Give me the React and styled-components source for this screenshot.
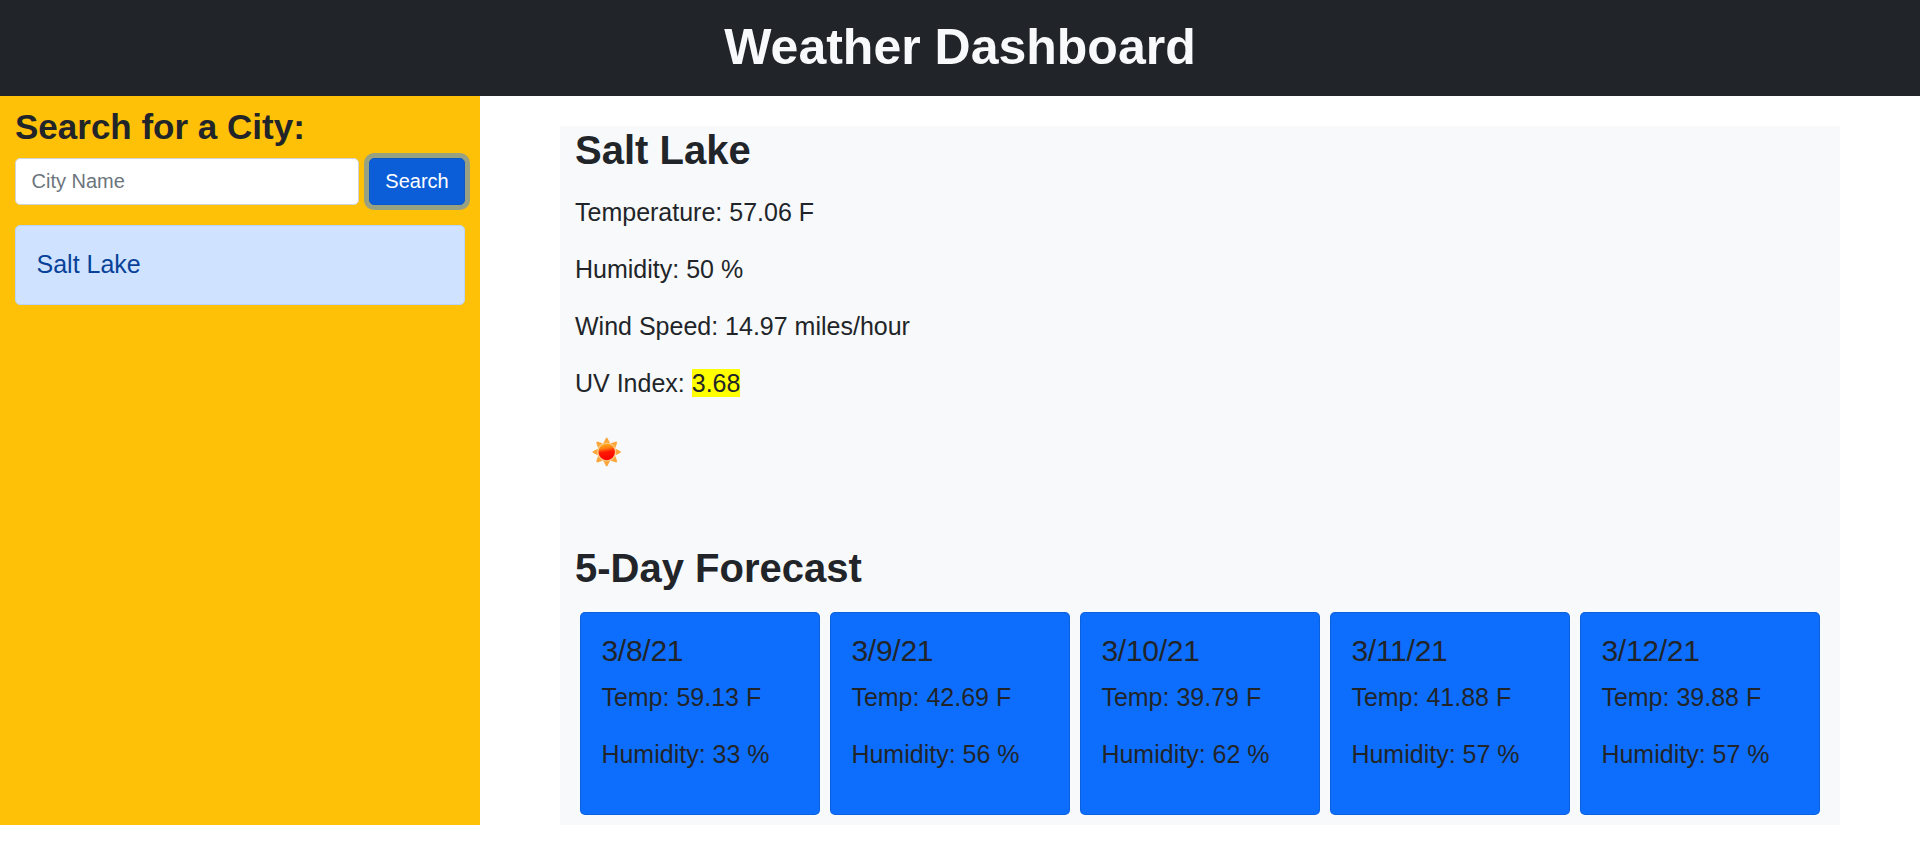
import React from "react";
import styled, { createGlobalStyle } from "styled-components";

const GlobalStyle = createGlobalStyle`
  *, *::before, *::after { box-sizing: border-box; }
  body {
    margin: 0;
    background: #fff;
    color: #212529;
    font-family: "Liberation Sans", Arial, sans-serif;
    font-size: 25px;
    line-height: 37px;
  }
  h1, h2, h3, p { margin: 0; }
`;

const Header = styled.header`
  height: 96px;
  padding-top: 17px;
  background: #212529;
  color: #f8f9fa;
  text-align: center;
`;

const Title = styled.h1`
  font-size: 50px;
  line-height: 60px;
  font-weight: 700;
`;

const Layout = styled.main`
  display: flex;
  height: 729px;
`;

const Sidebar = styled.aside`
  width: 480px;
  padding: 10px 15px 0;
  background: #ffc107;
`;

const SearchHeading = styled.h2`
  font-size: 35px;
  line-height: 42px;
  margin-bottom: 10px;
`;

const SearchForm = styled.form`
  display: flex;
  gap: 10px;
  margin-bottom: 20px;
`;

const CityInput = styled.input`
  flex: 1;
  min-width: 0;
  height: 47px;
  padding: 7px 15px 8px 15.5px;
  border: 1px solid #ced4da;
  border-radius: 5px;
  background: #fff;
  font: 20px/30px "Liberation Sans", Arial, sans-serif;
  &::placeholder { color: #6c757d; opacity: 1; }
`;

const SearchButton = styled.button`
  width: 96px;
  height: 47px;
  padding: 0 0 2px;
  border: 1px solid #0a58ca;
  border-radius: 5px;
  background: #0b5ed7;
  color: #fff;
  font: 20px/30px "Liberation Sans", Arial, sans-serif;
  box-shadow: 0 0 0 5px rgba(49, 132, 253, 0.5);
`;

const HistoryItem = styled.div`
  height: 80px;
  padding: 20px 20px 20px 20.5px;
  border: 1px solid #b6d4fe;
  border-radius: 5px;
  background: #cfe2ff;
  color: #084298;
`;

const Content = styled.section`
  flex: 1;
  padding: 30px 80px 0;
`;

const Panel = styled.div`
  height: 699px;
  padding: 0 15px;
  background: #f8f9fa;
`;

const SectionHeading = styled.h2`
  font-size: 40px;
  line-height: 48px;
  margin-bottom: 20px;
`;

const Reading = styled.p`
  margin-bottom: 20px;
`;

const UvValue = styled.span`
  background: #ff0;
`;

const WeatherIcon = styled.svg`
  display: block;
  width: 62px;
  height: 62px;
  margin: -1px 0 61px;
`;

const Forecast = styled.div`
  display: grid;
  grid-template-columns: repeat(5, 240px);
  gap: 10px;
  padding-left: 5px;
`;

const DayCard = styled.article`
  height: 203px;
  padding: 20px 20px 20px 20.4px;
  border: 1px solid rgba(0, 0, 0, 0.125);
  border-radius: 5px;
  background: #0d6efd;
`;

const DayTitle = styled.h3`
  font-size: 30px;
  line-height: 36px;
  font-weight: 400;
  letter-spacing: -0.25px;
  margin-bottom: 10px;
`;

const DAYS = [
  { date: "3/8/21", temp: "59.13", humidity: 33 },
  { date: "3/9/21", temp: "42.69", humidity: 56 },
  { date: "3/10/21", temp: "39.79", humidity: 62 },
  { date: "3/11/21", temp: "41.88", humidity: 57 },
  { date: "3/12/21", temp: "39.88", humidity: 57 },
];

const RAYS = [0, 45, 90, 135, 180, 225, 270, 315];

function SunIcon() {
  return (
    <WeatherIcon viewBox="0 0 62 62" aria-label="Clear sky">
      <defs>
        <linearGradient id="core" x1="0.35" y1="0" x2="0.5" y2="1">
          <stop offset="0" stopColor="#ffae18" />
          <stop offset="0.28" stopColor="#ff7d12" />
          <stop offset="0.5" stopColor="#ff1a05" />
          <stop offset="1" stopColor="#fa0000" />
        </linearGradient>
      </defs>
      <g transform="translate(31.7 31)">
        {RAYS.map((angle) => (
          <path key={angle} d="M-3.3 -9 L-0.6 -14.2 L0.6 -14.2 L3.3 -9 Z" fill="#fba63a" transform={`rotate(${angle})`} />
        ))}
        <circle r="9.4" fill="#fcc67c" />
        <circle r="8.2" fill="url(#core)" />
      </g>
    </WeatherIcon>
  );
}

export default function App() {
  return (
    <>
      <GlobalStyle />
      <Header>
        <Title>Weather Dashboard</Title>
      </Header>
      <Layout>
        <Sidebar>
          <SearchHeading>Search for a City:</SearchHeading>
          <SearchForm>
            <CityInput placeholder="City Name" />
            <SearchButton type="button">Search</SearchButton>
          </SearchForm>
          <HistoryItem>Salt Lake</HistoryItem>
        </Sidebar>
        <Content>
          <Panel>
            <SectionHeading>Salt Lake</SectionHeading>
            <Reading>Temperature: 57.06 F</Reading>
            <Reading>Humidity: 50 %</Reading>
            <Reading>Wind Speed: 14.97 miles/hour</Reading>
            <Reading>
              UV Index: <UvValue>3.68</UvValue>
            </Reading>
            <SunIcon />
            <SectionHeading>5-Day Forecast</SectionHeading>
            <Forecast>
              {DAYS.map((day) => (
                <DayCard key={day.date}>
                  <DayTitle>{day.date}</DayTitle>
                  <Reading>Temp: {day.temp} F</Reading>
                  <Reading>Humidity: {day.humidity} %</Reading>
                </DayCard>
              ))}
            </Forecast>
          </Panel>
        </Content>
      </Layout>
    </>
  );
}
